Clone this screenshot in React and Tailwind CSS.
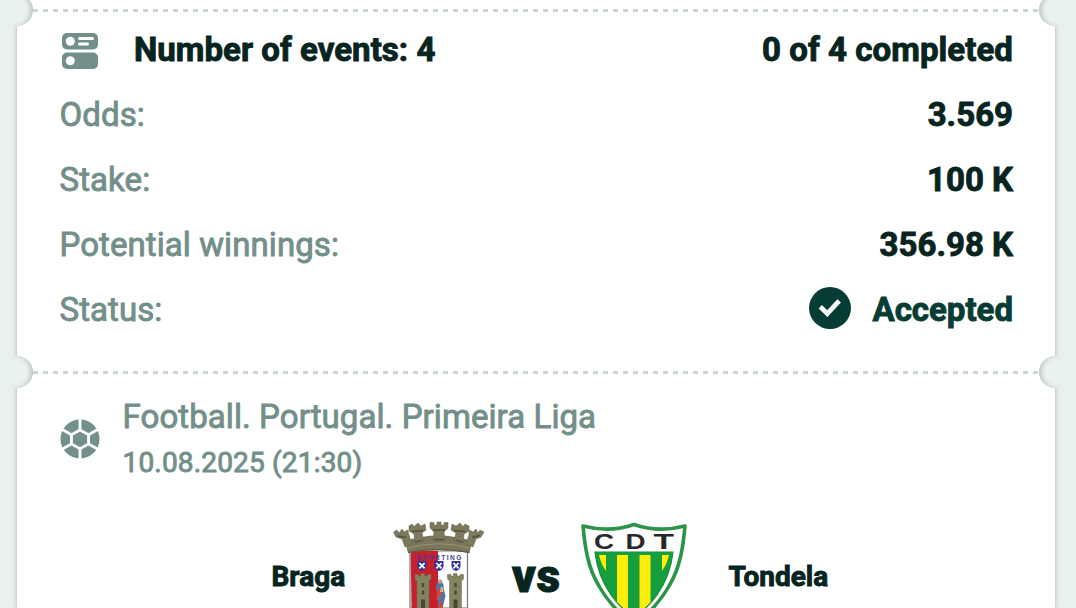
import clsx from 'clsx';

const rows = [
  { label: 'Odds:', value: '3.569' },
  { label: 'Stake:', value: '100 K' },
  { label: 'Potential winnings:', value: '356.98 K' },
];

const EventsIcon = () => (
  <svg width="36" height="36" viewBox="0 0 36 36" fill="none">
    <rect width="36" height="16.5" rx="5" fill="#738f8a" />
    <rect y="19.5" width="36" height="16.5" rx="5" fill="#738f8a" />
    <circle cx="8.3" cy="8.3" r="4.5" fill="#fff" />
    <circle cx="8.3" cy="27.8" r="4.5" fill="#fff" />
    <path d="M17.5 5.5h13M17.5 11h8" stroke="#fff" strokeWidth="3" strokeLinecap="round" />
  </svg>
);

const BallIcon = () => (
  <svg width="40" height="40" viewBox="0 0 40 40">
    <circle cx="20" cy="20" r="19.5" fill="#738f8a" />
    <path
      d="M20 11L28.6 15.8V25L20 29.7L11.4 25V15.8ZM20 11V0M20 29.7V40M28.6 15.8L38 10.3M28.6 25L38 30.2M11.4 15.8L2 10.3M11.4 25L2 30.2"
      fill="none"
      stroke="#fff"
      strokeWidth="2.9"
    />
  </svg>
);

const AcceptedIcon = () => (
  <svg width="42" height="42" viewBox="0 0 42 42">
    <circle cx="21" cy="21" r="21" fill="#073c35" />
    <path d="M11.3 19.8L18.3 26.6L30.2 13.8" fill="none" stroke="#fff" strokeWidth="4.8" />
  </svg>
);

const Shield = ({ x, y }) => (
  <g transform={`translate(${x} ${y})`}>
    <path d="M-4.5 -5H4.5V0Q4 4 0 5Q-4 4 -4.5 0Z" fill="#30349b" />
    <path d="M-2.6 -3L2.6 2.4M2.6 -3L-2.6 2.4" stroke="#fff" strokeWidth="1.8" />
  </g>
);

const Tower = ({ x }) => (
  <g transform={`translate(${x} 63.5)`}>
    <path
      d="M0 1H3.5V2.5H6V0H9.5V2.5H12.5V1H16V5.5L14 7.5V35H2V7.5L0 5.5Z"
      fill="#85835f"
      stroke="#6c6c50"
      strokeWidth="0.5"
    />
    <path d="M6.8 9.5h2.4v4H6.8zM6.8 17h2.4v4H6.8zM6 26h4v9H6z" fill="#454838" />
  </g>
);

const BragaCrest = () => (
  <svg width="100" height="98" viewBox="0 0 100 98" className="[-webkit-text-stroke:0px]">
    <path d="M20 41H77.5V98H20Z" fill="#fff" stroke="#737b79" strokeWidth="1.2" />
    <path d="M20.7 41H48V98H21.5Z" fill="#c6202d" />
    <path d="M15 31Q48 20 82 31L79.5 43Q48 37 18 43Z" fill="#7a775d" />
    <path d="M18 42.5Q48 36.5 79.5 42.5" fill="none" stroke="#59563f" strokeWidth="1" />
    <path d="M18 38Q48 29.5 79.5 38" fill="none" stroke="#96926f" strokeWidth="1" />
    <g fill="#7d795d" stroke="#625e48" strokeWidth="0.5">
      <path d="M3.5 22L7 20L9 23L12 19L14 22L18 20L19 25L22 34L15 37L12 29L6 27Z" />
      <path d="M19 16L22 14L24 16.5L28 13L31 16L35 14L36 20L32 23L34 31L25 33L24 24L19 21Z" />
      <path d="M40 12.5H44V15H47V12H51V15H54V12.5H58V18L54 22L55 31H43L44 22L40 18Z" />
      <path d="M62 14L66 16L70 13L73 16.5L75 14L79 16V21L74 24L73 33L64 31L66 23L61 20Z" />
      <path d="M79 20L83 22L86 19L88 23L90 20L94 22L91 27L86 29L83 37L76 34L79 25Z" />
    </g>
    <path
      d="M8 26l8 1.5M22 21.5l11 -1M43 20h12M64 20.5l11 1M82 27.5l8 -2M25 32l7 -2M44 29.5h10M66 30l7 2"
      stroke="#545038"
      strokeWidth="1.3"
    />
    <text x="26.5" y="49.6" textLength="45" fontFamily="Liberation Sans" fontWeight="700" fontSize="6.6" fill="#4a3b97">
      SPORTING
    </text>
    <Shield x="32" y="56" />
    <Shield x="49" y="56" />
    <Shield x="66" y="56" />
    <Tower x={25} />
    <Tower x={57.5} />
    <path d="M49.5 70q3 0 3 3q2 2 1 5l2 8l-3 12h-5l1 -12l-3 -8q0 -3 2 -5z" fill="#4576aa" />
    <path d="M48 76q4 4 4 9l-6 5zM51 87l2 11h-5z" fill="#cb493e" />
    <circle cx="50" cy="71.5" r="2.2" fill="#cf967e" />
    <path d="M51 76q3 3 2 6h-3z" fill="#ddb38d" />
  </svg>
);

const TondelaCrest = () => (
  <svg width="130" height="98" viewBox="0 0 130 98">
    <path
      d="M13 16Q40 23 64 14.5Q88 23 115 16C113 38 110 58 99 76Q88 96 64 116Q40 96 29 76C18 58 15 38 13 16Z"
      fill="#fff"
      stroke="#2b9449"
      strokeWidth="3.6"
      strokeLinejoin="round"
    />
    <clipPath id="tondela">
      <path d="M25 42H103C101 60 96 72 87 85Q78 98 64 107Q50 98 41 85C32 72 27 60 25 42Z" />
    </clipPath>
    <g clipPath="url(#tondela)">
      <path d="M20 40H110V110H20Z" fill="#15a03d" />
      <path d="M29 45H36V61Q31 54 29 45ZM47 45H58V110H47ZM69.5 45H80.5V110H69.5ZM92 45H99Q97 54 92 61Z" fill="#ffee08" />
    </g>
    <path
      d="M25 42H103C101 60 96 72 87 85Q78 98 64 107Q50 98 41 85C32 72 27 60 25 42Z"
      fill="none"
      stroke="#198d3b"
      strokeWidth="1.2"
    />
    <g fontFamily="Liberation Sans" fontWeight="700" fontSize="22.5" fill="#29272a">
      <text x="24" y="39" textLength="20" lengthAdjust="spacingAndGlyphs">C</text>
      <text x="55.5" y="39" textLength="20" lengthAdjust="spacingAndGlyphs">D</text>
      <text x="83.5" y="39" textLength="20.5" lengthAdjust="spacingAndGlyphs">T</text>
    </g>
  </svg>
);

const Notch = ({ side }) => (
  <div
    className={clsx(
      'absolute top-[-16px] size-8 rounded-full bg-[#e9f2f1]',
      side === 'left'
        ? 'left-[-16px] shadow-[inset_-4px_0_5px_-2px_#b4bfbc] [clip-path:inset(0_0_0_8px)]'
        : 'right-[-16px] shadow-[inset_4px_0_5px_-2px_#b4bfbc] [clip-path:inset(0_8px_0_0)]'
    )}
  />
);

const Divider = () => (
  <div className="relative h-0">
    <div className="absolute inset-x-4 top-[-1px] h-[3px] bg-[repeating-linear-gradient(90deg,#cbd6d2_0_5px,transparent_5px_10px)]" />
    <Notch side="left" />
    <Notch side="right" />
  </div>
);

const App = () => {
  return (
    <div className="h-[608px] overflow-hidden bg-[#e9f2f1] pr-[21px] pl-[17px] font-['Roboto',sans-serif] text-[33px] leading-[65px] text-[#738f8a] [-webkit-text-stroke:0.9px]">
      <div className="h-full bg-white pt-[10px] shadow-[0_0_5px_#a9b5b2]">
        <Divider />

        <div className="h-[362px] pt-[7px] pr-[42px] pl-[42.5px]">
          <div className="flex h-[65px] items-center font-bold text-[#07241f]">
            <div className="mt-[2px] ml-[2.5px]">
              <EventsIcon />
            </div>
            <span className="ml-[36px] tracking-[0.04px]">Number of events: 4</span>
            <span className="ml-auto tracking-[0.06px]">0 of 4 completed</span>
          </div>

          {rows.map((row) => (
            <div key={row.label} className="flex h-[65px] justify-between">
              <span className="tracking-[0.08px]">{row.label}</span>
              <span className="font-bold text-[#07241f]">{row.value}</span>
            </div>
          ))}

          <div className="flex h-[65px] justify-between">
            <span className="tracking-[0.08px]">Status:</span>
            <div className="flex font-bold text-[#073c35]">
              <div className="mt-[10px] mr-[21px]">
                <AcceptedIcon />
              </div>
              <span>Accepted</span>
            </div>
          </div>
        </div>

        <Divider />

        <div className="flex h-[138px] pt-[24px] pl-[43px]">
          <div className="mt-[23px] mr-[22.5px]">
            <BallIcon />
          </div>
          <div>
            <p className="text-[33px] leading-[42px] tracking-[0.08px]">Football. Portugal. Primeira Liga</p>
            <p className="mt-[5px] text-[28px] leading-[40px] tracking-[0.18px]">10.08.2025 (21:30)</p>
          </div>
        </div>

        <div className="flex h-[98px] text-[28px] font-bold text-[#07241f]">
          <span className="ml-[254.5px] w-[118.5px] shrink-0 pt-[34px]">Braga</span>
          <BragaCrest />
          <span className="w-[80px] shrink-0 pt-[34px] pl-[22px] text-[46px] font-black tracking-[0.8px]">vs</span>
          <TondelaCrest />
          <span className="pt-[34px] pl-[28.5px]">Tondela</span>
        </div>
      </div>
    </div>
  );
};

export default App;
